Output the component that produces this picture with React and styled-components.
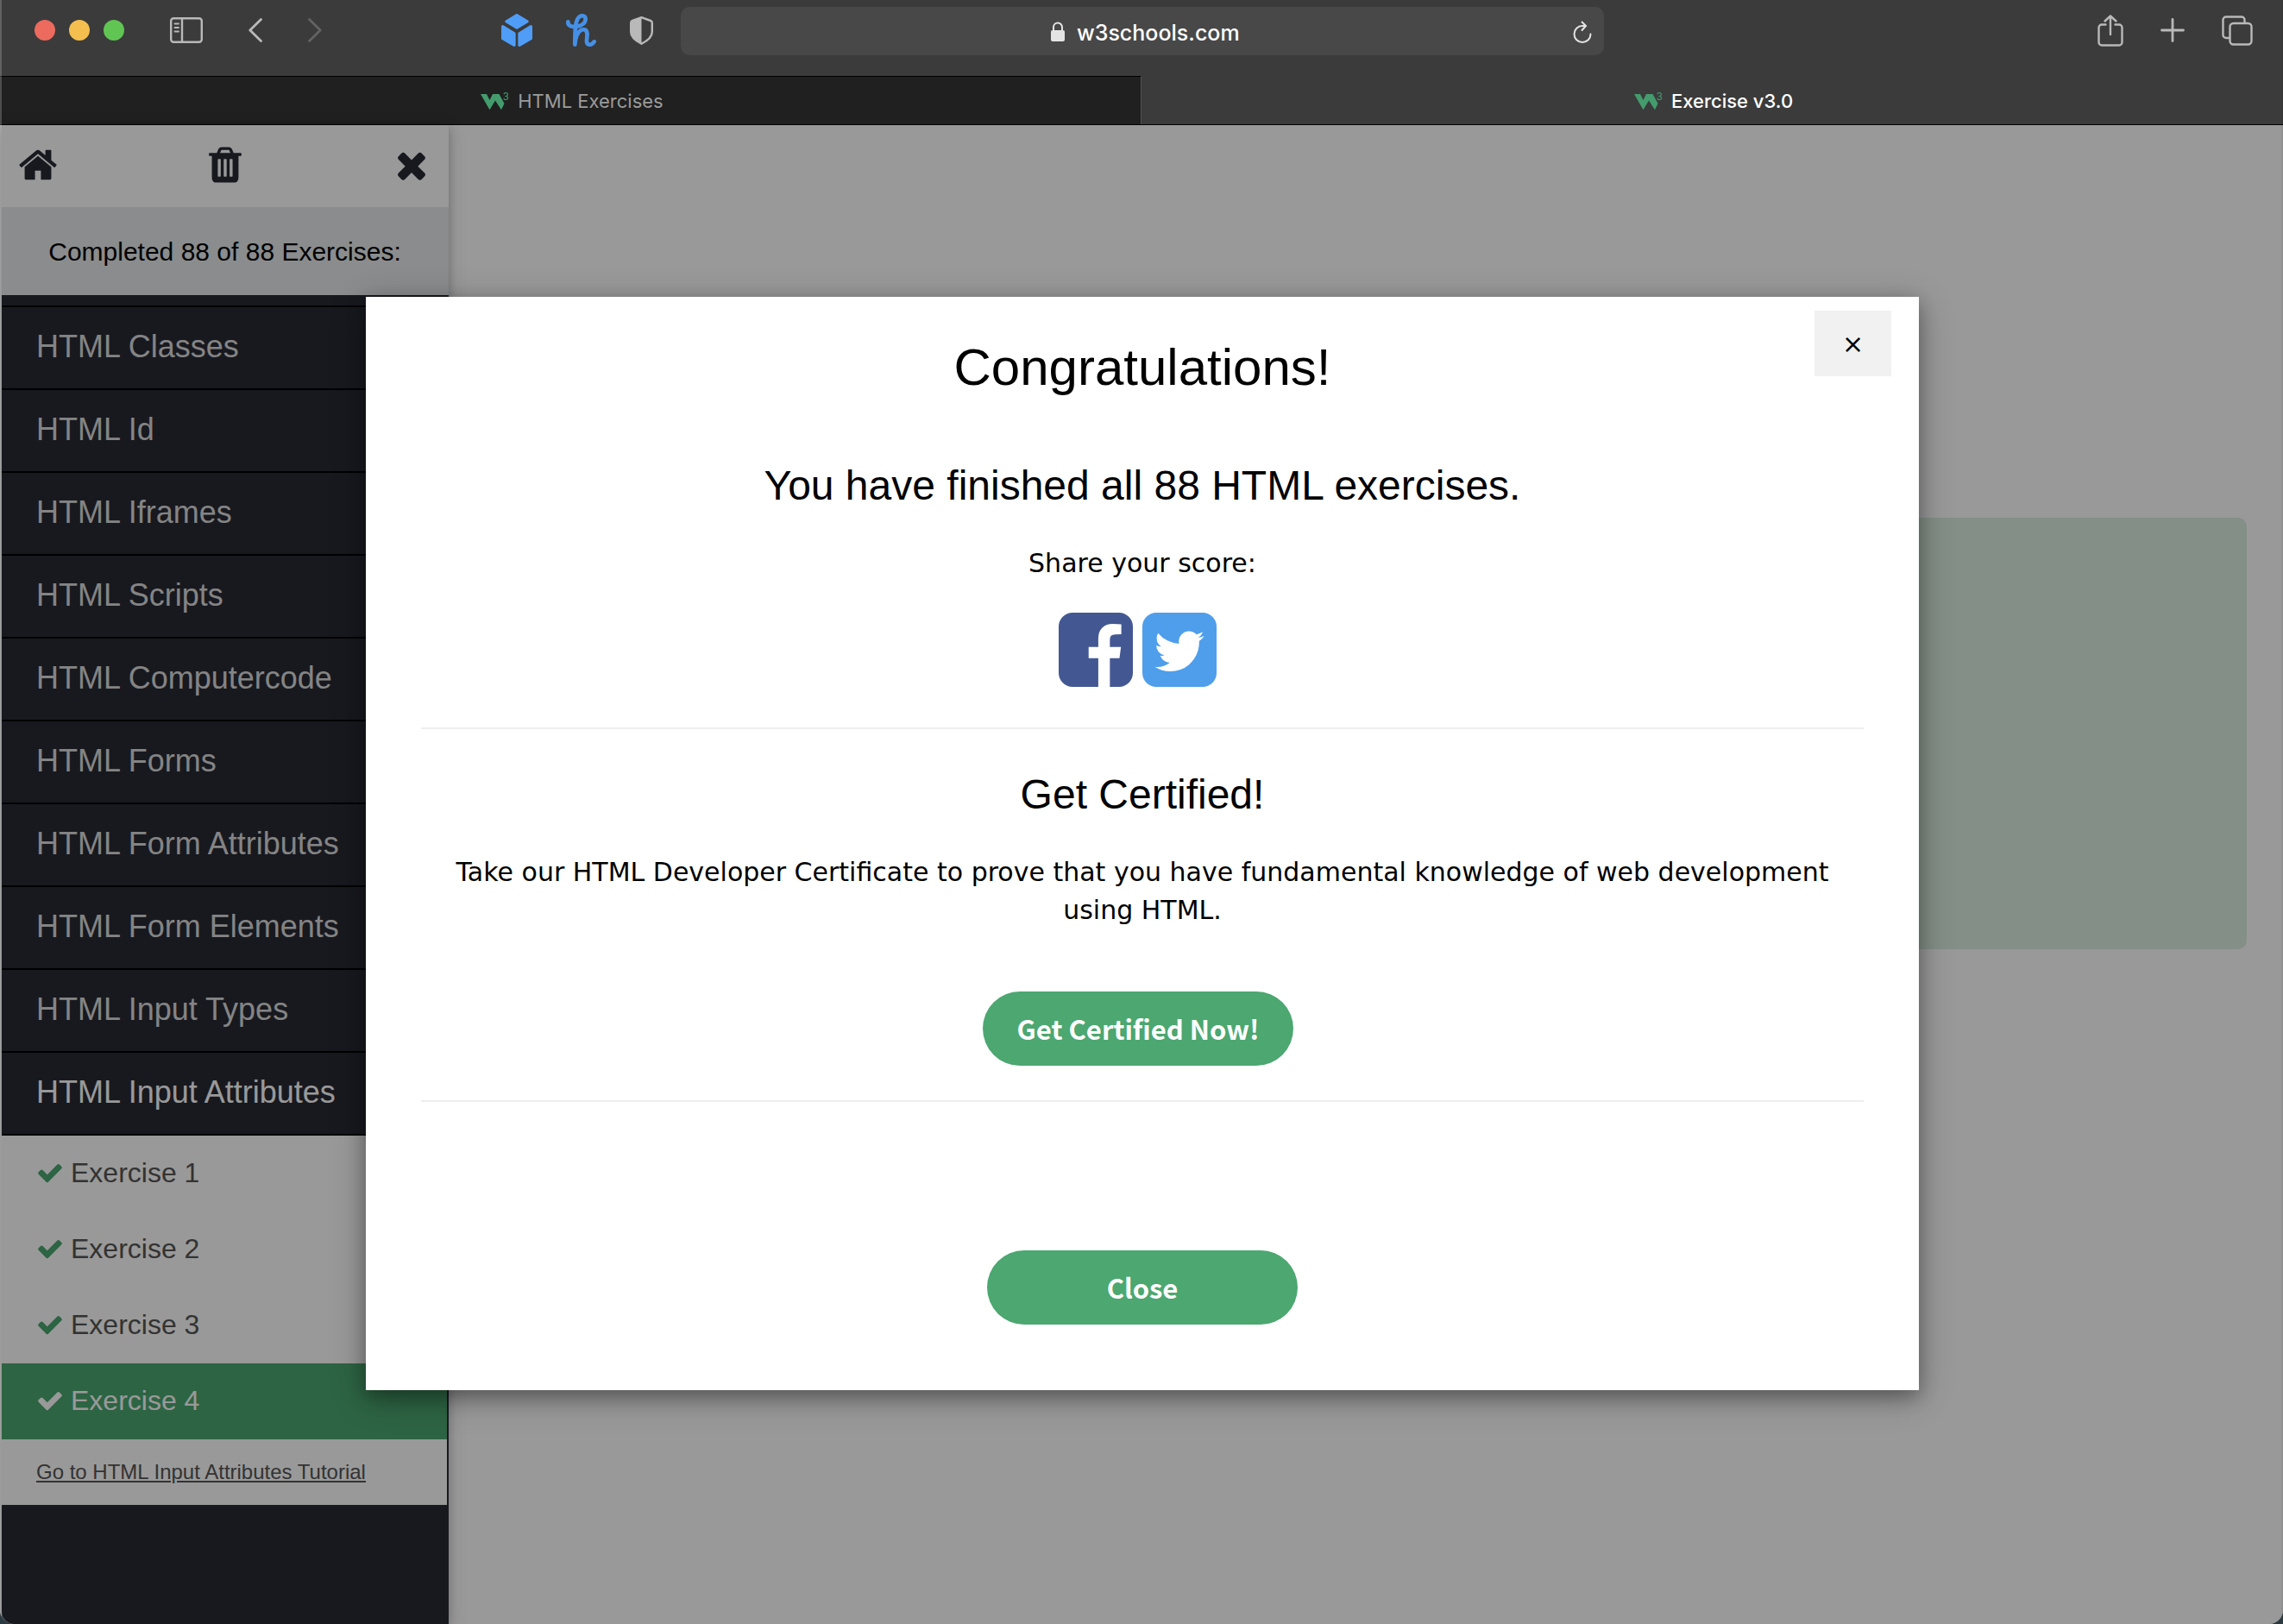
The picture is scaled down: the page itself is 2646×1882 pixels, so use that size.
import React from "react";
import styled, { createGlobalStyle } from "styled-components";

const sans = '"Liberation Sans", Arial, sans-serif';
const ui = 'Inter, "Liberation Sans", sans-serif';
const green = "#4ca771";

const GlobalStyle = createGlobalStyle`
  * { box-sizing: border-box; }
  body { margin: 0; background: #2b3940; font-family: ${sans}; }
  h1, h2, p, ul { margin: 0; padding: 0; }
  button, input { font: inherit; color: inherit; border: 0; background: none; padding: 0; }
  button { cursor: pointer; }
  svg { display: block; }
`;

const Window = styled.div`
  position: relative;
  display: flex;
  flex-direction: column;
  height: 100vh;
  overflow: hidden;
  border-radius: 0 0 16px 16px;
  background: #3b3b3b;

  &::after {
    content: "";
    position: absolute;
    inset: 0;
    border-left: 2px solid rgba(255, 255, 255, 0.2);
    border-right: 2px solid rgba(0, 0, 0, 0.06);
    border-radius: 0 0 16px 16px;
    pointer-events: none;
  }
`;

/* ---------- browser chrome ---------- */

const Toolbar = styled.header`
  display: grid;
  grid-template-columns: 1fr minmax(0, 1070px) 1fr;
  align-items: center;
  height: 88px;
  padding: 0 0 16px 2px;
  color: #b9b9b9;
`;

const Group = styled.div`
  display: flex;
  align-items: center;
  gap: ${(p) => p.$gap}px;
`;

const LeftSide = styled.div`
  display: flex;
  align-items: center;
  justify-content: space-between;
  padding: 0 32px 2px 38px;
`;

const RightSide = styled(Group)`
  justify-content: flex-end;
  padding: 0 35px 2px 0;
`;

const Light = styled.button`
  width: 24px;
  height: 24px;
  border-radius: 50%;
  background: ${(p) => p.$color};
`;

const IconButton = styled.button`
  display: flex;
  color: ${(p) => p.$color || "inherit"};
`;

const Address = styled.form`
  display: grid;
  grid-template-columns: 1fr auto 1fr;
  align-items: center;
  height: 56px;
  padding: 2px 14px 0 24px;
  border-radius: 10px;
  background: #484848;
  color: #e4e4e4;
`;

const AddressField = styled.label`
  grid-column: 2;
  display: flex;
  align-items: center;
  gap: 14px;
`;

const AddressInput = styled.input`
  width: 192px;
  height: 42px;
  padding-top: 2px;
  font: 500 25px/40px ${ui};
  color: #ffffff;
  outline: none;
`;

const Reload = styled(IconButton)`
  justify-self: end;
`;

const TabBar = styled.nav`
  display: grid;
  grid-template-columns: 1fr 1fr;
  height: 57px;
  flex: none;
  border-bottom: 1px solid #000000;
`;

const Tab = styled.a`
  display: flex;
  align-items: center;
  justify-content: center;
  gap: 10px;
  padding-left: 4px;
  border-top: 1px solid ${(p) => (p.$active ? "transparent" : "#000000")};
  border-right: 1px solid ${(p) => (p.$active ? "transparent" : "#505050")};
  background: ${(p) => (p.$active ? "#3b3b3b" : "#202020")};
  color: ${(p) => (p.$active ? "#ffffff" : "#9b9b9b")};
  font: ${(p) => (p.$active ? 500 : 400)} 22px/32px ${ui};
  text-decoration: none;
`;

/* ---------- page ---------- */

const Page = styled.div`
  position: relative;
  flex: 1;
  min-height: 0;
  display: flex;
  padding-left: 2px;
  background: #ffffff;
`;

const Sidebar = styled.aside`
  flex: none;
  width: 518px;
  display: flex;
  flex-direction: column;
  background: #282a35;
  box-shadow: 0 4px 10px rgba(0, 0, 0, 0.18), 0 4px 20px rgba(0, 0, 0, 0.16);
`;

const SidebarTools = styled.div`
  display: flex;
  align-items: center;
  justify-content: space-between;
  height: 95px;
  padding: 0 19px 4px 18px;
  background: #ffffff;
  color: #282a35;
`;

const Progress = styled.p`
  padding: 29px 1px 28px 0;
  background: #e7e9eb;
  color: #000000;
  font-size: 30px;
  line-height: 45px;
  text-align: center;
`;

const TopicList = styled.ul`
  list-style: none;
  padding-top: 12px;
`;

const Topic = styled.li`
  border-bottom: 2px solid #000000;
  &:first-child { border-top: 2px solid #000000; }
`;

const TopicLink = styled.a`
  display: block;
  padding: 19px 40px 21px;
  color: ${(p) => (p.$active ? "#ffffff" : "#dddddd")};
  font-size: 36px;
  line-height: 54px;
  text-decoration: none;
`;

const ExerciseList = styled.ul`
  list-style: none;
  margin-right: 2px;
  background: #ffffff;
`;

const ExerciseLink = styled.a`
  display: flex;
  align-items: center;
  gap: 8px;
  height: 88px;
  padding: 0 40px 2px;
  background: ${(p) => (p.$active ? green : "transparent")};
  color: ${(p) => (p.$active ? "#ffffff" : "#555555")};
  font-size: 32px;
  line-height: 48px;
  text-decoration: none;

  svg { color: ${(p) => (p.$active ? "#ffffff" : green)}; }
`;

const TutorialLink = styled.a`
  display: block;
  padding: 20px 40px;
  color: #555555;
  font-size: 24px;
  line-height: 36px;
`;

const Main = styled.main`
  flex: 1;
  padding: 455px 42px 0 40px;
`;

const Question = styled.section`
  height: 500px;
  border-radius: 10px;
  background: #ddeee1;
`;

/* ---------- dialog ---------- */

const Overlay = styled.div`
  position: absolute;
  inset: 0;
  display: flex;
  justify-content: center;
  align-items: flex-start;
  padding: 199px 0 0 2px;
  background: rgba(0, 0, 0, 0.4);
`;

const Dialog = styled.div`
  position: relative;
  width: min(1800px, 92%);
  padding: 37px 64px 76px;
  background: #ffffff;
  color: #000000;
  text-align: center;
  box-shadow: 0 8px 20px rgba(0, 0, 0, 0.3), 0 8px 40px rgba(0, 0, 0, 0.24);
`;

const Dismiss = styled.button`
  position: absolute;
  top: 16px;
  right: 32px;
  width: 89px;
  height: 76px;
  background: #f1f1f1;
  font: 30px/45px "DejaVu Sans", Verdana, sans-serif;
`;

const Title = styled.h1`
  margin-bottom: 56px;
  font-size: 60px;
  line-height: 90px;
  font-weight: 400;
`;

const Heading = styled.h2`
  margin-bottom: 32px;
  font-size: 48px;
  line-height: 72px;
  font-weight: 400;
`;

const Text = styled.p`
  font: 30px/44px "DejaVu Sans", Verdana, sans-serif;
`;

const Actions = styled.div`
  display: flex;
  justify-content: center;
  margin-top: ${(p) => p.$top}px;
`;

const ShareLink = styled.a`
  margin-right: 11px;
  color: ${(p) => p.$color};
`;

const Rule = styled.hr`
  margin: ${(p) => p.$top}px 0 40px;
  border: 0;
  border-top: 2px solid #eeeeee;
`;

const pill = `
  width: 360px;
  height: 86px;
  border-radius: 43px;
  background: ${green};
  color: #ffffff;
  font: 700 31px/86px "Noto Sans CJK SC", "Open Sans", sans-serif;
  text-align: center;
  text-decoration: none;
`;

const CertifyLink = styled.a`
  ${pill}
  margin-right: 10px;
`;

const CloseButton = styled.button`
  ${pill}
`;

/* ---------- icons ---------- */

const glyphs = {
  home: "M1472 992v480q0 26-19 45t-45 19h-384v-384h-256v384h-384q-26 0-45-19t-19-45v-480q0-1 .5-3t.5-3l575-474 575 474q1 2 1 6zm223-69l-62 74q-8 9-21 11h-3q-13 0-21-7l-692-577-692 577q-12 8-24 7-13-2-21-11l-62-74q-8-10-7-23.5t11-21.5l719-599q32-26 76-26t76 26l244 204v-195q0-14 9-23t23-9h192q14 0 23 9t9 23v408l219 182q10 8 11 21.5t-7 23.5z",
  trash: "M704 1376v-704q0-14-9-23t-23-9h-64q-14 0-23 9t-9 23v704q0 14 9 23t23 9h64q14 0 23-9t9-23zm256 0v-704q0-14-9-23t-23-9h-64q-14 0-23 9t-9 23v704q0 14 9 23t23 9h64q14 0 23-9t9-23zm256 0v-704q0-14-9-23t-23-9h-64q-14 0-23 9t-9 23v704q0 14 9 23t23 9h64q14 0 23-9t9-23zm-544-992h448l-48-117q-7-9-17-11h-317q-10 2-17 11zm928 32v64q0 14-9 23t-23 9h-96v948q0 83-47 143.5t-113 60.5h-832q-66 0-113-58.5t-47-141.5v-952h-96q-14 0-23-9t-9-23v-64q0-14 9-23t23-9h309l70-167q15-37 54-63t79-26h320q40 0 79 26t54 63l70 167h309q14 0 23 9t9 23z",
  times: "M1490 1322q0 40-28 68l-136 136q-28 28-68 28t-68-28l-294-294-294 294q-28 28-68 28t-68-28l-136-136q-28-28-28-68t28-68l294-294-294-294q-28-28-28-68t28-68l136-136q28-28 68-28t68 28l294 294 294-294q28-28 68-28t68 28l136 136q28 28 28 68t-28 68l-294 294 294 294q28 28 28 68z",
  check: "M1671 566q0 40-28 68l-724 724-136 136q-28 28-68 28t-68-28l-136-136-362-362q-28-28-28-68t28-68l136-136q28-28 68-28t68 28l294 295 656-657q28-28 68-28t68 28l136 136q28 28 28 68z",
  facebook: "M1376 128q119 0 203.5 84.5t84.5 203.5v960q0 119-84.5 203.5t-203.5 84.5h-188v-595h199l30-232h-229v-148q0-56 23.5-84t91.5-28l122-1v-207q-63-9-178-9-136 0-217.5 80t-81.5 226v171h-200v232h200v595h-532q-119 0-203.5-84.5t-84.5-203.5v-960q0-119 84.5-203.5t203.5-84.5h960z",
  twitter: "M1408 610q-56 25-121 34 68-40 93-117-65 38-134 51-61-66-153-66-87 0-148.5 61.5t-61.5 148.5q0 29 5 48-129-7-242-65t-192-155q-29 50-29 106 0 114 91 175-47-1-100-26v2q0 75 50 133.5t123 72.5q-29 8-51 8-13 0-39-4 21 63 74.5 104t121.5 42q-116 90-261 90-26 0-50-3 148 94 322 94 112 0 210-35.5t168-95 120.5-137 75-162 24.5-168.5q0-18-1-27 63-45 105-109zm256-194v960q0 119-84.5 203.5t-203.5 84.5h-960q-119 0-203.5-84.5t-84.5-203.5v-960q0-119 84.5-203.5t203.5-84.5h960q119 0 203.5 84.5t84.5 203.5z",
};

const Glyph = ({ name, size, box = "0 0 1792 1792" }) => (
  <svg width={size} height={size} viewBox={box} fill="currentColor" aria-hidden="true">
    <path d={glyphs[name]} />
  </svg>
);

const Line = ({ w, h, stroke = 2.4, children }) => (
  <svg
    width={w}
    height={h}
    viewBox={`0 0 ${w} ${h}`}
    fill="none"
    stroke="currentColor"
    strokeWidth={stroke}
    strokeLinecap="round"
    strokeLinejoin="round"
    aria-hidden="true"
  >
    {children}
  </svg>
);

const SidebarIcon = () => (
  <Line w={38} h={30}>
    <rect x="1.2" y="1.2" width="35.6" height="27.6" rx="3" />
    <path d="M14 1v28" />
    <path d="M5.5 7.5h4.5M5.5 12h4.5M5.5 16.5h4.5" strokeWidth="1.8" />
  </Line>
);

const BackIcon = () => (
  <Line w={16} h={28} stroke={2.8}>
    <path d="M14.5 1.5L1.8 14l12.7 12.5" />
  </Line>
);

const ForwardIcon = () => (
  <Line w={16} h={28} stroke={2.8}>
    <path d="M1.5 1.5L14.2 14 1.5 26.5" />
  </Line>
);

const CubeIcon = () => (
  <svg width="36" height="38" viewBox="63 51 108 114" fill="#4f9df7" stroke="#4f9df7" strokeWidth="10" strokeLinejoin="round" aria-hidden="true">
    <path d="M117 56l36 21.5-36 22-36-22z" />
    <path d="M68 95l40 24.5V160l-40-23z" />
    <path d="M166 95l-40 24.5V160l40-23z" />
  </svg>
);

const HoneyIcon = () => (
  <svg width="35" height="38" viewBox="279 51 105 114" fill="none" stroke="#4590e6" strokeWidth="14" strokeLinecap="round" aria-hidden="true">
    <path d="M286 79C285 94 300 97 317 95C338 92 347 80 347 70C347 55 329 54 321 66C311 80 310 110 310 158" />
    <path d="M311 150C314 120 328 104 342 106C356 108 353 125 351 142C349 163 368 162 377 148" />
  </svg>
);

const ShieldIcon = () => (
  <svg width="27" height="33" viewBox="0 0 27 33" aria-hidden="true">
    <path d="M13.5 1.2L24 5q1.8.6 1.8 2.5V18c0 6.5-6.5 10.8-12.3 13.7C7.7 28.8 1.2 24.5 1.2 18V7.5Q1.2 5.6 3 5z" fill="none" stroke="#b9b9b9" strokeWidth="2.4" strokeLinejoin="round" />
    <path d="M13.5 1.2L3 5Q1.2 5.6 1.2 7.5V18c0 6.5 6.5 10.8 12.3 13.7z" fill="#b9b9b9" />
  </svg>
);

const LockIcon = () => (
  <svg width="16" height="24" viewBox="0 0 16 24" aria-hidden="true">
    <rect x="0" y="10" width="16" height="13" rx="2" fill="currentColor" />
    <path d="M3 11V6.5a5 5 0 0 1 10 0V11" fill="none" stroke="currentColor" strokeWidth="2" />
  </svg>
);

const ReloadIcon = () => (
  <Line w={22} h={26} stroke={2}>
    <path d="M20.5 15.5a9.5 9.5 0 1 1-9.5-9.5h3.5" />
    <path d="M10.5 1.5l4.5 4.5-4.5 5" />
  </Line>
);

const ShareIcon = () => (
  <Line w={30} h={37}>
    <path d="M9.5 11.5H5a3.5 3.5 0 0 0-3.5 3.5v17A3.5 3.5 0 0 0 5 35.5h20a3.5 3.5 0 0 0 3.5-3.5V15a3.5 3.5 0 0 0-3.5-3.5h-4.5" />
    <path d="M15 23V1.5M8.5 7.5l6.5-6 6.5 6" />
  </Line>
);

const PlusIcon = () => (
  <Line w={28} h={28} stroke={2.8}>
    <path d="M14 1.5v25M1.5 14h25" />
  </Line>
);

const TabsIcon = () => (
  <Line w={36} h={35}>
    <rect x="9.5" y="9" width="25" height="24.5" rx="4" />
    <path d="M9 26H5a3.5 3.5 0 0 1-3.5-3.5V5A3.5 3.5 0 0 1 5 1.5h18A3.5 3.5 0 0 1 26.5 5v3.5" />
  </Line>
);

const Favicon = () => (
  <svg width="33" height="24" viewBox="0 0 33 24" fill="#449c6d" aria-hidden="true">
    <path d="M0 4h7l3.5 7L14 4h7.5l6 11-3.5 7.3L17 11.5l-6.5 10.8z" />
    <text x="26" y="10.5" fontFamily="Liberation Sans, sans-serif" fontSize="12">3</text>
  </svg>
);

const topics = [
  "HTML Classes",
  "HTML Id",
  "HTML Iframes",
  "HTML Scripts",
  "HTML Computercode",
  "HTML Forms",
  "HTML Form Attributes",
  "HTML Form Elements",
  "HTML Input Types",
  "HTML Input Attributes",
];

export default function App() {
  return (
    <>
      <GlobalStyle />
      <Window>
        <Toolbar>
          <LeftSide>
            <Group $gap={53}>
              <Group $gap={16}>
                <Light $color="#ec6a5e" aria-label="Close window" />
                <Light $color="#f4bf4f" aria-label="Minimize window" />
                <Light $color="#61c554" aria-label="Zoom window" />
              </Group>
              <IconButton aria-label="Show sidebar"><SidebarIcon /></IconButton>
              <IconButton aria-label="Back"><BackIcon /></IconButton>
              <IconButton aria-label="Forward" $color="#636363"><ForwardIcon /></IconButton>
            </Group>
            <Group $gap={39}>
              <IconButton aria-label="Extension"><CubeIcon /></IconButton>
              <IconButton aria-label="Honey"><HoneyIcon /></IconButton>
              <IconButton aria-label="Privacy report"><ShieldIcon /></IconButton>
            </Group>
          </LeftSide>
          <Address onSubmit={(e) => e.preventDefault()}>
            <AddressField>
              <LockIcon />
              <AddressInput aria-label="Address" defaultValue="w3schools.com" />
            </AddressField>
            <Reload type="button" aria-label="Reload"><ReloadIcon /></Reload>
          </Address>
          <RightSide $gap={43}>
            <IconButton aria-label="Share"><ShareIcon /></IconButton>
            <IconButton aria-label="New tab"><PlusIcon /></IconButton>
            <IconButton aria-label="Tab overview"><TabsIcon /></IconButton>
          </RightSide>
        </Toolbar>
        <TabBar>
          <Tab href="#exercises"><Favicon />HTML Exercises</Tab>
          <Tab href="#exercise" $active><Favicon />Exercise v3.0</Tab>
        </TabBar>
        <Page>
          <Sidebar>
            <SidebarTools>
              <IconButton aria-label="Home"><Glyph name="home" size={48} /></IconButton>
              <IconButton aria-label="Reset score"><Glyph name="trash" size={48} /></IconButton>
              <IconButton aria-label="Close menu"><Glyph name="times" size={48} /></IconButton>
            </SidebarTools>
            <Progress>Completed 88 of 88 Exercises:</Progress>
            <TopicList>
              {topics.map((name, i) => (
                <Topic key={name}>
                  <TopicLink href="#topic" $active={i === topics.length - 1}>{name}</TopicLink>
                </Topic>
              ))}
            </TopicList>
            <ExerciseList>
              {[1, 2, 3, 4].map((n) => (
                <li key={n}>
                  <ExerciseLink href="#exercise" $active={n === 4}>
                    <Glyph name="check" size={32} />
                    Exercise {n}
                  </ExerciseLink>
                </li>
              ))}
              <li>
                <TutorialLink href="#tutorial">Go to HTML Input Attributes Tutorial</TutorialLink>
              </li>
            </ExerciseList>
          </Sidebar>
          <Main>
            <Question />
          </Main>
          <Overlay>
            <Dialog role="dialog" aria-modal="true" aria-labelledby="done-title">
              <Dismiss aria-label="Dismiss">×</Dismiss>
              <Title id="done-title">Congratulations!</Title>
              <Heading>You have finished all 88 HTML exercises.</Heading>
              <Text>Share your score:</Text>
              <Actions $top={35}>
                <ShareLink href="#facebook" aria-label="Share on Facebook" $color="#435893">
                  <Glyph name="facebook" size={86} box="128 128 1536 1536" />
                </ShareLink>
                <ShareLink href="#twitter" aria-label="Share on Twitter" $color="#4e9eec">
                  <Glyph name="twitter" size={86} box="128 128 1536 1536" />
                </ShareLink>
              </Actions>
              <Rule $top={47} />
              <Heading>Get Certified!</Heading>
              <Text>
                Take our HTML Developer Certificate to prove that you have fundamental knowledge of web development using HTML.
              </Text>
              <Actions $top={72}>
                <CertifyLink href="#certified">Get Certified Now!</CertifyLink>
              </Actions>
              <Rule $top={40} />
              <Actions $top={172}>
                <CloseButton>Close</CloseButton>
              </Actions>
            </Dialog>
          </Overlay>
        </Page>
      </Window>
    </>
  );
}
